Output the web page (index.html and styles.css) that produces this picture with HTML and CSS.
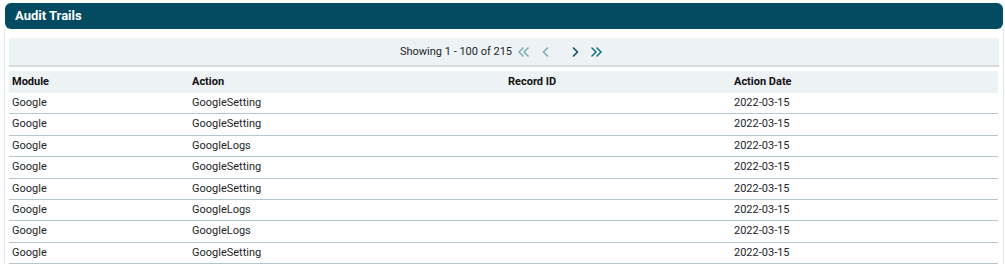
FILE: index.html
```html
<!DOCTYPE html>
<html>
<head>
<meta charset="utf-8">
<link rel="stylesheet" href="styles.css">
</head>
<body>
<div class="page">
  <div class="card">
    <div class="card-head">Audit Trails</div>
    <div class="card-body">
      <div class="pager">
        <span class="pager-text">Showing 1 - 100 of 215</span>
        <svg class="pg first dis" width="11" height="10" viewBox="0 0 11 10"><path d="M5 1 L1 5 L5 9 M10 1 L6 5 L10 9"/></svg>
        <svg class="pg prev dis" width="7" height="10" viewBox="0 0 7 10"><path d="M5.5 1 L1.5 5 L5.5 9"/></svg>
        <svg class="pg next" width="7" height="10" viewBox="0 0 7 10"><path d="M1.5 1 L5.5 5 L1.5 9"/></svg>
        <svg class="pg last" width="11" height="10" viewBox="0 0 11 10"><path d="M1 1 L5 5 L1 9 M6 1 L10 5 L6 9"/></svg>
      </div>
      <table class="grid">
        <colgroup>
          <col class="c1"><col class="c2"><col class="c3"><col class="c4">
        </colgroup>
        <thead>
          <tr><th>Module</th><th>Action</th><th>Record ID</th><th>Action Date</th></tr>
        </thead>
        <tbody>
          <tr><td>Google</td><td>GoogleSetting</td><td></td><td>2022-03-15</td></tr>
          <tr><td>Google</td><td>GoogleSetting</td><td></td><td>2022-03-15</td></tr>
          <tr><td>Google</td><td>GoogleLogs</td><td></td><td>2022-03-15</td></tr>
          <tr><td>Google</td><td>GoogleSetting</td><td></td><td>2022-03-15</td></tr>
          <tr><td>Google</td><td>GoogleSetting</td><td></td><td>2022-03-15</td></tr>
          <tr><td>Google</td><td>GoogleLogs</td><td></td><td>2022-03-15</td></tr>
          <tr><td>Google</td><td>GoogleLogs</td><td></td><td>2022-03-15</td></tr>
          <tr><td>Google</td><td>GoogleSetting</td><td></td><td>2022-03-15</td></tr>
        </tbody>
      </table>
    </div>
  </div>
</div>
</body>
</html>
```

FILE: styles.css
```css
html, body {
  margin: 0;
  padding: 0;
  background: #ffffff;
}
body {
  font-family: Roboto, "Liberation Sans", Arial, sans-serif;
  color: #212529;
  overflow: hidden;
}
.page {
  padding: 3px 1px 0 4px;
}
.card {
  width: 1000px;
}
.card-head {
  margin: 0 1px;
  height: 26px;
  background: #034b60;
  border-radius: 6px;
  color: #ffffff;
  font-weight: 700;
  font-size: 13px;
  line-height: 26px;
  padding-left: 10px;
}
.card-body {
  border-left: 1px solid #e6e9ec;
  border-right: 1px solid #e6e9ec;
  padding: 9px 4px 0 4px;
}
.pager {
  height: 27px;
  background: #edf2f5;
  border-bottom: 2px solid #d5dadd;
  display: flex;
  align-items: center;
  justify-content: center;
  font-size: 11px;
  padding-right: 6px;
}
.pager-text {
  margin-right: 6px;
  color: #212529;
}
.pg {
  fill: none;
  stroke-width: 1.6;
  stroke-linecap: round;
  stroke-linejoin: round;
}
.pg.dis { stroke: #7eaab6; }
.pg.next { stroke: #154a5c; margin-left: 23px; }
.pg.prev { margin-left: 13px; }
.pg.last { stroke: #137481; margin-left: 12px; }
.grid {
  margin-top: 4px;
  width: 989px;
  border-collapse: collapse;
  table-layout: fixed;
  font-size: 11px;
}
.c1 { width: 180px; }
.c2 { width: 316px; }
.c3 { width: 226px; }
.c4 { width: 267px; }
.grid th {
  background: #edf2f5;
  text-align: left;
  font-weight: 700;
  color: #111;
  padding: 4px 3px;
  height: 14px;
  line-height: 14px;
}
.grid td {
  padding: 4px 3px;
  line-height: 12.4px;
  border-bottom: 1px solid #b4c7cf;
  white-space: nowrap;
}
```
